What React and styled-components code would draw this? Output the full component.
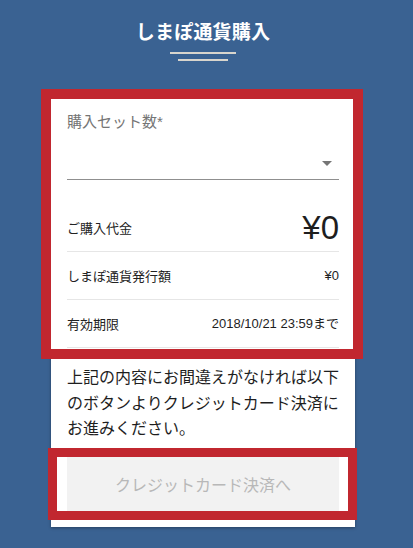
import React from 'react';
import styled, { createGlobalStyle } from 'styled-components';

const GlobalStyle = createGlobalStyle`
  html, body {
    margin: 0;
    padding: 0;
    background-color: #3a6292;
    font-family: 'Liberation Sans', 'Noto Sans CJK JP', sans-serif;
  }
`;

const Page = styled.div`
  width: 413px;
  height: 548px;
  overflow: hidden;
  background-color: #3a6292;
`;

const Header = styled.header`
  display: flex;
  flex-direction: column;
  align-items: center;
  padding: 21px 0 0 0;
  margin-right: 7px;
  height: 78px;
  box-sizing: border-box;
`;

const Title = styled.h1`
  margin: 0;
  font-size: 19px;
  line-height: 24px;
  font-weight: 700;
  color: #fff;
  letter-spacing: 0.2px;
`;

const Deco = styled.span`
  display: block;
  height: 2px;
  width: ${({ w }) => w}px;
  margin-top: ${({ gap }) => gap}px;
  background-color: #d8d5cd;
`;

const Card = styled.main`
  width: 304px;
  margin: 21px 0 0 51px;
  background-color: #fff;
  box-shadow: 0 1px 3px rgba(0, 0, 0, 0.35);
  padding-bottom: 7px;
`;

const Highlight = styled.div`
  position: relative;

  &::after {
    content: '';
    position: absolute;
    top: ${({ inset }) => inset[0]}px;
    right: ${({ inset }) => inset[1]}px;
    bottom: ${({ inset }) => inset[2]}px;
    left: ${({ inset }) => inset[3]}px;
    border: ${({ thick }) => thick}px solid #c1272f;
    pointer-events: none;
  }
`;

const Summary = styled.section`
  padding: 13px 16px 0 16px;
`;

const Label = styled.label`
  display: block;
  font-size: 15px;
  line-height: 20px;
  color: #757575;
`;

const Select = styled.div`
  position: relative;
  margin-top: 15px;
  height: 32px;
  border-bottom: 1px solid #8f8f8f;
  display: flex;
  align-items: center;
  justify-content: flex-end;
  padding-right: 7px;
`;

const Caret = styled.span`
  width: 0;
  height: 0;
  border-left: 5px solid transparent;
  border-right: 5px solid transparent;
  border-top: 5px solid #757575;
`;

const Rows = styled.dl`
  margin: 24px 0 0 0;
`;

const Row = styled.div`
  display: flex;
  align-items: center;
  justify-content: space-between;
  height: 47px;
  border-bottom: 1px solid #e6e6e6;
  color: #222;
  font-size: 13px;
`;

const Term = styled.dt`
  margin: 0;
`;

const Value = styled.dd`
  margin: 0;
  font-size: ${({ big }) => (big ? '33px' : '13px')};
  line-height: 1;
  color: #1e1e1e;
`;

const Notice = styled.p`
  margin: 17px 16px 0 16px;
  font-size: 16px;
  line-height: 25.6px;
  color: #1e1e1e;
`;

const ButtonArea = styled.div`
  margin-top: 6px;
  padding: 9px 16px 9px 16px;
`;

const PayButton = styled.button`
  display: block;
  width: 100%;
  height: 54px;
  border: none;
  background-color: #f2f2f2;
  color: #b8b8b8;
  font-family: inherit;
  font-size: 16px;
  cursor: not-allowed;
`;

const rows = [
  { term: 'ご購入代金', value: '¥0', big: true },
  { term: 'しまぽ通貨発行額', value: '¥0' },
  { term: '有効期限', value: '2018/10/21 23:59まで' },
];

const App = () => (
  <Page>
    <GlobalStyle />
    <Header>
      <Title>しまぽ通貨購入</Title>
      <Deco w={66} gap={7} />
      <Deco w={50} gap={5} />
    </Header>
    <Card>
      <Highlight inset={[-10, -8, -11, -10]} thick={10}>
        <Summary>
          <Label>購入セット数*</Label>
          <Select>
            <Caret />
          </Select>
          <Rows>
            {rows.map((r) => (
              <Row key={r.term}>
                <Term>{r.term}</Term>
                <Value big={r.big}>{r.value}</Value>
              </Row>
            ))}
          </Rows>
        </Summary>
      </Highlight>
      <Notice>
        上記の内容にお間違えがなければ以下のボタンよりクレジットカード決済にお進みください。
      </Notice>
      <Highlight inset={[0, -2, 0, -3]} thick={9}>
        <ButtonArea>
          <PayButton disabled>クレジットカード決済へ</PayButton>
        </ButtonArea>
      </Highlight>
    </Card>
  </Page>
);

export default App;
